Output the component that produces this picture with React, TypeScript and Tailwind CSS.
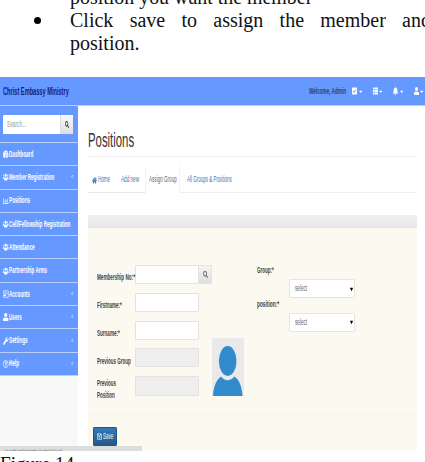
import { useLayoutEffect, useRef } from "react";
import type { ReactNode } from "react";
import type { IconType } from "react-icons";
import {
  FaBell,
  FaCaretDown,
  FaCheckSquare,
  FaHome,
  FaRegAddressCard,
  FaRegChartBar,
  FaRegQuestionCircle,
  FaRegSave,
  FaSearch,
  FaTachometerAlt,
  FaThList,
  FaUser,
  FaUsers,
  FaWrench,
} from "react-icons/fa";

interface FitProps {
  w: number;
  className?: string;
  children: ReactNode;
}

// squeezes a single line of text into a fixed width
function Fit({ w, className = "", children }: FitProps) {
  const ref = useRef<HTMLSpanElement>(null);

  useLayoutEffect(() => {
    const el = ref.current;
    if (el) el.style.transform = `scaleX(${w / el.offsetWidth})`;
  }, [w]);

  return (
    <span className="flex shrink-0" style={{ width: w }}>
      <span ref={ref} className={`shrink-0 origin-left whitespace-nowrap ${className}`}>
        {children}
      </span>
    </span>
  );
}

interface MenuItem {
  label: string;
  icon: IconType;
  w: number;
  sub?: boolean;
}

const menu: MenuItem[] = [
  { label: "Dashboard", icon: FaTachometerAlt, w: 24 },
  { label: "Member Registration", icon: FaUsers, w: 45.5, sub: true },
  { label: "Positions", icon: FaRegChartBar, w: 21 },
  { label: "Cell/Fellowship Registration", icon: FaUsers, w: 61.5 },
  { label: "Attendance", icon: FaUsers, w: 25.5 },
  { label: "Partnership Arms", icon: FaUsers, w: 38 },
  { label: "Accounts", icon: FaRegAddressCard, w: 21, sub: true },
  { label: "Users", icon: FaUser, w: 13, sub: true },
  { label: "Settings", icon: FaWrench, w: 19, sub: true },
  { label: "Help", icon: FaRegQuestionCircle, w: 10, sub: true },
];

const headerIcons: IconType[] = [FaCheckSquare, FaThList, FaBell, FaUser];

function Header() {
  return (
    <header className="flex h-[29px] items-center border-b border-[#b9cdf5] bg-[#6699ff] pl-[3px]">
      <Fit w={66} className="text-[10px] font-bold text-[#101c80]">Christ Embassy Ministry</Fit>
      <div className="ml-[240px] flex items-center">
        <Fit w={37} className="text-[8.5px] font-bold text-[#32405c]">Welcome, Admin</Fit>
        <div className="ml-1.5 flex gap-[10.5px]">
          {headerIcons.map((Icon, i) => (
            <span key={i} className="flex w-[10px] items-center justify-between text-white">
              <Icon className="h-[8px] w-[5px]" preserveAspectRatio="none" />
              <FaCaretDown className="h-[7px] w-[3.5px]" preserveAspectRatio="none" />
            </span>
          ))}
        </div>
      </div>
    </header>
  );
}

function Sidebar() {
  return (
    <aside className="h-[345px] w-[77.5px] shrink-0 bg-[#f8f8f8]">
      <div className="flex h-[37px] border-b border-[#b9cfff] bg-[#6699ff] pl-[3px] pt-[9px]">
        <div className="flex h-[19px] w-[70px] rounded-[1px] bg-white">
          <div className="flex w-[57px] items-center pl-1">
            <Fit w={19} className="text-[8.5px] text-[#999]">Search...</Fit>
          </div>
          <div className="flex flex-1 items-center justify-center border-l border-[#ddd] bg-gradient-to-b from-[#f8f8f8] to-[#dedfe3]">
            <FaSearch className="h-[7px] w-1 text-[#333]" preserveAspectRatio="none" />
          </div>
        </div>
      </div>
      {menu.map(({ label, icon: Icon, w, sub }) => (
        <div
          key={label}
          className="flex h-[23.3px] items-center border-b border-[#b9cfff] bg-[#6699ff] pl-[3px] pr-1 text-white"
        >
          <Icon className="h-[8px] w-[5.5px] shrink-0" preserveAspectRatio="none" />
          <Fit w={w} className="text-[8.5px] font-bold">{label}</Fit>
          {sub && <span className="ml-auto text-[8px] leading-none text-[#d5e2ff]">‹</span>}
        </div>
      ))}
    </aside>
  );
}

function Tabs() {
  return (
    <nav className="mt-[9px] flex h-[27px] items-center text-[9px] text-[#3b78ae]">
      <div className="flex h-full w-[57px] items-center border-b border-[#e8e8e8] pl-1 pt-0.5">
        <FaHome className="mr-px h-[7px] w-[5px] shrink-0" preserveAspectRatio="none" />
        <Fit w={12}>Home</Fit>
        <span className="w-[11px] shrink-0" />
        <Fit w={18}>Add new</Fit>
      </div>
      <div className="flex h-full w-[35px] items-center border-x border-[#f3f3f3] pl-[3px] pt-px text-[#666]">
        <Fit w={28}>Assign Group</Fit>
      </div>
      <div className="flex h-full flex-1 items-center border-b border-[#f0f0f0] pl-[7px] pt-0.5">
        <Fit w={45}>All Groups &amp; Positions</Fit>
      </div>
    </nav>
  );
}

interface FieldProps {
  label: string;
  w: number;
  disabled?: boolean;
  search?: boolean;
}

function Field({ label, w, disabled, search }: FieldProps) {
  return (
    <div className="flex h-[27.8px] items-start">
      <div className="flex h-[25px] w-[38px] shrink-0 items-center">
        <Fit w={w} className="text-[8.5px] font-bold text-[#444]">{label}</Fit>
      </div>
      <div
        className={`h-[19px] w-[64px] shrink-0 rounded-[1px] border border-[#e4e2de] ${
          disabled ? "bg-[#eeeeee]" : "bg-white"
        }`}
      />
      {search && (
        <div className="flex h-[19px] w-[13px] items-center justify-center rounded-r-[1px] border-y border-r border-[#e4e4e4] bg-gradient-to-b from-[#f5f5f5] to-[#dedede]">
          <FaSearch className="h-[7px] w-[5px] text-[#666]" preserveAspectRatio="none" />
        </div>
      )}
    </div>
  );
}

function Select({ label, w }: { label: string; w: number }) {
  return (
    <div className="h-[33.8px]">
      <Fit w={w} className="text-[8.5px] font-bold leading-[10px] text-[#444]">{label}</Fit>
      <div className="ml-8 mt-[4px] flex h-[19px] w-[66px] items-center justify-between rounded-[1px] border border-[#e6e5e2] bg-white pl-[5px] pr-px">
        <Fit w={12} className="text-[8.5px] text-[#666]">select</Fit>
        <FaCaretDown className="h-[10px] w-[3px] text-black" preserveAspectRatio="none" />
      </div>
    </div>
  );
}

function Avatar() {
  return (
    <svg viewBox="0 0 32 58" className="h-[58px] w-8 bg-[#e9e9ea]">
      <ellipse cx="15.7" cy="23" rx="8.8" ry="15" fill="#328bcb" />
      <path d="M1 58C1.5 49 4 42 9 38.5Q15.5 46 22.5 38.5C27.5 42 30 49 30.5 58Z" fill="#328bcb" />
    </svg>
  );
}

function PositionForm() {
  return (
    <section className="mt-[22px] h-[236px] bg-[#fcf9f1]">
      <div className="h-[13px] border-b border-[#e3e3e3] bg-gradient-to-b from-[#f0f0f0] to-[#e9e9eb]" />
      <div className="flex h-[187px] border-b border-[#f6f4f0] pl-[9px]">
        <div className="w-[115px] shrink-0 pt-[37px]">
          <Field label="Membership No:*" w={38} search />
          <Field label="Firstname:*" w={25} />
          <Field label="Surname:*" w={23} />
          <Field label="Previous Group" w={34} disabled />
          <div className="flex">
            <div className="w-[38px] shrink-0 pt-[2px] text-[8.5px] font-bold leading-[11.5px] text-[#444]">
              <Fit w={19}>Previous</Fit>
              <Fit w={18}>Position</Fit>
            </div>
            <div className="h-[20px] w-[64px] rounded-[1px] border border-[#e4e2de] bg-[#eeeeee]" />
          </div>
        </div>
        <div className="pt-[110px]">
          <Avatar />
        </div>
        <div className="ml-[13px] pt-[37px]">
          <Select label="Group:*" w={17} />
          <Select label="position:*" w={22} />
        </div>
      </div>
      <button className="ml-[4.5px] mt-3 flex h-[19px] w-6 items-center rounded-[1px] border border-[#245580] bg-gradient-to-b from-[#337ab7] to-[#265a88] pl-[3px] text-white">
        <FaRegSave className="mr-px h-[7px] w-[5px] shrink-0" preserveAspectRatio="none" />
        <Fit w={10} className="text-[8.5px]">Save</Fit>
      </button>
    </section>
  );
}

export default function App() {
  return (
    <div className="h-[462px] w-[425px] overflow-hidden bg-white font-['Liberation_Sans']">
      <div className="h-[77px] overflow-hidden font-['Liberation_Serif'] text-[20px] leading-[23px] text-[#111]">
        <div className="-mt-[14px] ml-[70px]">
          <Fit w={242}>position you want the member</Fit>
        </div>
        <div className="flex">
          <span className="flex w-[70px] shrink-0 items-center pl-[34px]">
            <span className="size-[7px] rounded-full bg-black" />
          </span>
          <p className="flex w-[361px] shrink-0 justify-between">
            {"Click save to assign the member and".split(" ").map((word) => (
              <span key={word}>{word}</span>
            ))}
          </p>
        </div>
        <div className="ml-[70px]">
          <Fit w={69}>position.</Fit>
        </div>
      </div>

      <div className="relative h-[374px]">
        <Header />
        <div className="flex">
          <Sidebar />
          <main className="ml-[10.5px] w-[329px]">
            <div className="h-[51px] border-b border-[#eeeeee] pt-[22px]">
              <Fit w={46} className="text-[20px] leading-[24px] text-[#333]">Positions</Fit>
            </div>
            <Tabs />
            <PositionForm />
          </main>
        </div>
        {/* browser status bar over the page's bottom edge */}
        <div className="absolute bottom-0 left-0 h-[5px] w-[142px] overflow-hidden bg-[#dddddd] pl-[5px] pt-[2px] text-[7px] leading-[7px] text-[#777]">
          <Fit w={57}>localhost/ministry/admin/load</Fit>
        </div>
      </div>

      <div className="pt-[2px] font-['Liberation_Serif'] text-[20px] leading-[23px] text-[#111]">
        <Fit w={74}>Figure 14</Fit>
      </div>
    </div>
  );
}
